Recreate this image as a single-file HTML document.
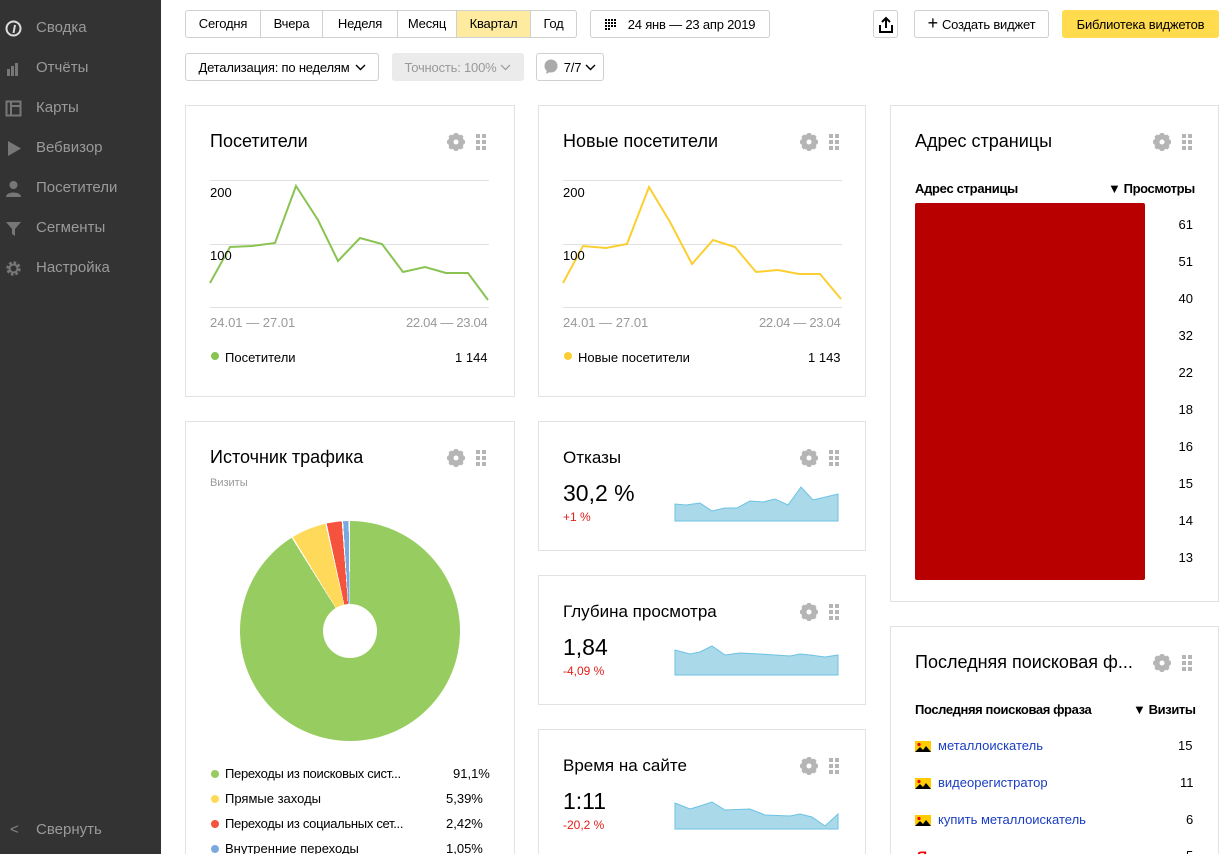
<!DOCTYPE html>
<html><head><meta charset="utf-8"><style>
*{box-sizing:border-box;margin:0;padding:0}
html,body{width:1228px;height:854px;overflow:hidden}
body{background:#fff;font-family:"Liberation Sans","DejaVu Sans",sans-serif;color:#000;position:relative}
.side{position:absolute;left:0;top:0;width:161px;height:854px;background:#333}
.si{position:absolute;left:36px;font-size:15px;color:#9a9a9a}
.ic{position:absolute;left:5px;width:17px;height:17px}
.a{position:absolute}
.btn{position:absolute;border:1px solid #d0d0d0;border-radius:3px;font-size:13px;display:flex;align-items:center;justify-content:center;background:#fff;white-space:nowrap;letter-spacing:-0.2px}
.grp{position:absolute;left:185px;top:10px;height:28px;display:flex;border:1px solid #d0d0d0;border-radius:3px;font-size:13px;overflow:hidden;letter-spacing:-0.2px}
.grp div{text-align:center;line-height:26px;border-right:1px solid #d0d0d0}
.grp div:last-child{border-right:none}
.card{position:absolute;border:1px solid #e2e2e2;background:#fff}
.t{position:absolute;font-size:18px;color:#000}
.sm{font-size:13px}
</style></head><body>
<div class="side">
 <svg class="ic" style="top:20px" viewBox="0 0 17 17"><circle cx="8.5" cy="8.5" r="7" fill="none" stroke="#ddd" stroke-width="2"/><path d="M8.5 13 L10 5" stroke="#ddd" stroke-width="2"/></svg>
 <div class="si" style="top:19px">Сводка</div>
 <svg class="ic" style="top:60px" viewBox="0 0 17 17"><rect x="2" y="9" width="3" height="7" fill="#777"/><rect x="6" y="6" width="3" height="10" fill="#777"/><rect x="10" y="3" width="3" height="13" fill="#777"/></svg>
 <div class="si" style="top:59px">Отчёты</div>
 <svg class="ic" style="top:100px" viewBox="0 0 17 17"><rect x="1.5" y="1.5" width="14" height="14" fill="none" stroke="#777" stroke-width="2"/><path d="M6 2v13M6 6h9" stroke="#777" stroke-width="2"/></svg>
 <div class="si" style="top:99px">Карты</div>
 <svg class="ic" style="top:140px" viewBox="0 0 17 17"><path d="M3 1l13 7.5L3 16z" fill="#777"/></svg>
 <div class="si" style="top:139px">Вебвизор</div>
 <svg class="ic" style="top:180px" viewBox="0 0 17 17"><circle cx="8.5" cy="5" r="4" fill="#777"/><path d="M1 17c0-6 15-6 15 0z" fill="#777"/></svg>
 <div class="si" style="top:179px">Посетители</div>
 <svg class="ic" style="top:220px" viewBox="0 0 17 17"><path d="M1 2h15l-6 7v7l-3-2V9z" fill="#777"/></svg>
 <div class="si" style="top:219px">Сегменты</div>
 <svg class="ic" style="top:260px" viewBox="0 0 17 17"><circle cx="8.5" cy="8.5" r="5.5" fill="none" stroke="#777" stroke-width="3.5" stroke-dasharray="2.5 1.8"/><circle cx="8.5" cy="8.5" r="4" fill="none" stroke="#777" stroke-width="2"/></svg>
 <div class="si" style="top:259px">Настройка</div>
 <div class="si" style="left:10px;top:821px;color:#888">&lt;</div>
 <div class="si" style="top:821px">Свернуть</div>
</div>

<div class="grp"><div style="width:75px">Сегодня</div><div style="width:62px">Вчера</div><div style="width:75px">Неделя</div><div style="width:59px">Месяц</div><div style="width:74px;background:#ffeba0">Квартал</div><div style="width:45px">Год</div></div>
<div class="btn" style="left:590px;top:10px;width:180px;height:28px"><svg width="12" height="11" style="margin-right:11px"><g fill="#000"><rect x="0" y="0" width="2" height="2"/><rect x="3" y="0" width="2" height="2"/><rect x="6" y="0" width="2" height="2"/><rect x="9" y="0" width="2" height="2"/><rect x="0" y="3" width="2" height="2"/><rect x="3" y="3" width="2" height="2"/><rect x="6" y="3" width="2" height="2"/><rect x="9" y="3" width="2" height="2"/><rect x="0" y="6" width="2" height="2"/><rect x="3" y="6" width="2" height="2"/><rect x="6" y="6" width="2" height="2"/><rect x="9" y="6" width="2" height="2"/><rect x="0" y="9" width="2" height="2"/><rect x="3" y="9" width="2" height="2"/></g></svg>24 янв — 23 апр 2019</div>
<div class="btn" style="left:873px;top:10px;width:25px;height:28px"><svg width="14" height="17" viewBox="0 0 14 17"><path d="M7 12V2M3 6l4-4 4 4" stroke="#000" stroke-width="2" fill="none"/><path d="M1 9v7h12V9" stroke="#000" stroke-width="2" fill="none"/></svg></div>
<div class="btn" style="left:914px;top:10px;width:135px;height:28px"><span style="font-size:18px;margin-right:4px;margin-top:-2px">+</span>Создать виджет</div>
<div class="btn" style="left:1062px;top:10px;width:157px;height:28px;background:#ffdb4d;border-color:#ffdb4d">Библиотека виджетов</div>

<div class="btn" style="left:185px;top:53px;width:194px;height:28px">Детализация: по неделям <svg width="11" height="7" style="margin-left:5px"><path d="M1 1l4.5 4.5L10 1" stroke="#000" stroke-width="1.4" fill="none"/></svg></div>
<div class="btn" style="left:392px;top:53px;width:132px;height:28px;background:#ebebeb;border-color:#ebebeb;color:#999">Точность: 100% <svg width="11" height="7" style="margin-left:4px"><path d="M1 1l4.5 4.5L10 1" stroke="#999" stroke-width="1.2" fill="none"/></svg></div>
<div class="btn" style="left:536px;top:53px;width:68px;height:28px"><svg width="14" height="16" style="margin-right:6px"><ellipse cx="7" cy="7" rx="6.5" ry="6.5" fill="#aaa"/><path d="M3 11l-1 4 4-2z" fill="#aaa"/></svg>7/7<svg width="11" height="7" style="margin-left:4px"><path d="M1 1l4.5 4.5L10 1" stroke="#000" stroke-width="1.4" fill="none"/></svg></div>

<svg width="0" height="0" style="position:absolute"><defs>
<g id="gear"><circle cx="9" cy="9" r="6" fill="none" stroke="#b5b5b5" stroke-width="4"/><g stroke="#b5b5b5" stroke-width="3.5"><path d="M9 0v18M0 9h18M2.6 2.6l12.8 12.8M15.4 2.6L2.6 15.4"/></g><circle cx="9" cy="9" r="2.5" fill="#fff"/></g>
<g id="dots" fill="#b5b5b5"><rect x="0" y="0" width="4" height="4"/><rect x="6" y="0" width="4" height="4"/><rect x="0" y="6" width="4" height="4"/><rect x="6" y="6" width="4" height="4"/><rect x="0" y="12" width="4" height="4"/><rect x="6" y="12" width="4" height="4"/></g>
</defs></svg>

<!-- cards -->
<div class="card" style="left:185px;top:105px;width:330px;height:292px"></div>
<div class="card" style="left:538px;top:105px;width:328px;height:292px"></div>
<div class="card" style="left:185px;top:421px;width:330px;height:450px"></div>
<div class="card" style="left:538px;top:421px;width:328px;height:130px"></div>
<div class="card" style="left:538px;top:575px;width:328px;height:130px"></div>
<div class="card" style="left:538px;top:729px;width:328px;height:140px"></div>
<div class="card" style="left:890px;top:105px;width:329px;height:497px"></div>
<div class="card" style="left:890px;top:626px;width:329px;height:250px"></div>

<svg class="a" style="left:0;top:0;z-index:2" width="1228" height="854">
 <g stroke="#e0e0e0"><path d="M210 180.5H489M210 244.5H489M210 307.5H489M563 180.5H842M563 244.5H842M563 307.5H842"/></g>
 <polyline fill="none" stroke="#8ac352" stroke-width="2" points="210,283 230,247 252,246 275,243 296,186 318,220 338,261 360,238 382,244 403,272 425,267 446,273 468,273 488,300"/>
 <polyline fill="none" stroke="#fbcf31" stroke-width="2" points="563,283 583,246 606,248 627,244 649,187 670,222 692,264 713,240 735,247 756,272 778,270 799,274 820,274 841,299"/>
 <polygon fill="#aad9ea" stroke="#6cc2e3" stroke-width="1" points="675,521 675,504 686,505 700,503 712,511 725,508 737,508 750,501 763,502 775,499 788,505 801,487 813,500 838,494 838,521"/>
 <polygon fill="#aad9ea" stroke="#6cc2e3" stroke-width="1" points="675,675 675,650 690,654 700,652 712,646 725,655 740,653 760,654 790,656 800,654 810,655 825,657 838,655 838,675"/>
 <polygon fill="#aad9ea" stroke="#6cc2e3" stroke-width="1" points="675,829 675,803 690,809 700,806 712,802 725,810 750,809 765,815 790,816 800,814 812,817 825,826 838,814 838,829"/>
</svg>

<div class="t" style="left:210px;top:131px">Посетители</div>
<svg class="a" style="left:447px;top:133px" width="46" height="18"><use href="#gear"/><use href="#dots" x="29" y="1"/></svg>
<div class="a sm" style="left:210px;top:185px;z-index:3">200</div>
<div class="a sm" style="left:210px;top:248px;z-index:3">100</div>
<div class="a sm" style="left:210px;top:315px;color:#999">24.01 — 27.01</div>
<div class="a sm" style="left:406px;top:315px;color:#999;letter-spacing:-0.3px">22.04 — 23.04</div>
<div class="a" style="left:211px;top:352px;width:8px;height:8px;border-radius:50%;background:#8ac352"></div>
<div class="a sm" style="left:225px;top:350px">Посетители</div>
<div class="a sm" style="left:455px;top:350px">1 144</div>

<div class="t" style="left:563px;top:131px">Новые посетители</div>
<svg class="a" style="left:800px;top:133px" width="46" height="18"><use href="#gear"/><use href="#dots" x="29" y="1"/></svg>
<div class="a sm" style="left:563px;top:185px;z-index:3">200</div>
<div class="a sm" style="left:563px;top:248px;z-index:3">100</div>
<div class="a sm" style="left:563px;top:315px;color:#999">24.01 — 27.01</div>
<div class="a sm" style="left:759px;top:315px;color:#999;letter-spacing:-0.3px">22.04 — 23.04</div>
<div class="a" style="left:564px;top:352px;width:8px;height:8px;border-radius:50%;background:#fbcf31"></div>
<div class="a sm" style="left:578px;top:350px">Новые посетители</div>
<div class="a sm" style="left:808px;top:350px">1 143</div>

<div class="t" style="left:210px;top:447px">Источник трафика</div>
<svg class="a" style="left:447px;top:449px" width="46" height="18"><use href="#gear"/><use href="#dots" x="29" y="1"/></svg>
<div class="a" style="left:210px;top:477px;font-size:11px;color:#999">Визиты</div>
<div class="a" style="left:240px;top:521px;width:220px;height:220px;border-radius:50%;background:conic-gradient(#97cd60 0 91.1%,#fff 91.1% 91.3%,#ffd95a 91.3% 96.4%,#fff 96.4% 96.6%,#f5533d 96.6% 98.8%,#fff 98.8% 99%,#7aa9e0 99% 99.8%,#fff 99.8%)"></div>
<div class="a" style="left:323px;top:604px;width:54px;height:54px;border-radius:50%;background:#fff"></div>
<div class="a" style="left:211px;top:770px;width:8px;height:8px;border-radius:50%;background:#97cd60"></div>
<div class="a sm" style="left:225px;top:766px;letter-spacing:-0.3px">Переходы из поисковых сист...</div><div class="a sm" style="left:453px;top:766px">91,1%</div>
<div class="a" style="left:211px;top:795px;width:8px;height:8px;border-radius:50%;background:#ffd95a"></div>
<div class="a sm" style="left:225px;top:791px">Прямые заходы</div><div class="a sm" style="left:446px;top:791px">5,39%</div>
<div class="a" style="left:211px;top:820px;width:8px;height:8px;border-radius:50%;background:#f5533d"></div>
<div class="a sm" style="left:225px;top:816px;letter-spacing:-0.3px">Переходы из социальных сет...</div><div class="a sm" style="left:446px;top:816px">2,42%</div>
<div class="a" style="left:211px;top:845px;width:8px;height:8px;border-radius:50%;background:#7aa9e0"></div>
<div class="a sm" style="left:225px;top:841px">Внутренние переходы</div><div class="a sm" style="left:446px;top:841px">1,05%</div>

<div class="t" style="left:563px;top:448px;font-size:17px">Отказы</div>
<svg class="a" style="left:800px;top:449px" width="46" height="18"><use href="#gear"/><use href="#dots" x="29" y="1"/></svg>
<div class="a" style="left:563px;top:480px;font-size:23px">30,2 %</div>
<div class="a" style="left:563px;top:510px;font-size:12px;color:#e0201a">+1 %</div>

<div class="t" style="left:563px;top:602px;font-size:17px">Глубина просмотра</div>
<svg class="a" style="left:800px;top:603px" width="46" height="18"><use href="#gear"/><use href="#dots" x="29" y="1"/></svg>
<div class="a" style="left:563px;top:634px;font-size:23px">1,84</div>
<div class="a" style="left:563px;top:664px;font-size:12px;color:#e0201a">-4,09 %</div>

<div class="t" style="left:563px;top:756px;font-size:17px">Время на сайте</div>
<svg class="a" style="left:800px;top:757px" width="46" height="18"><use href="#gear"/><use href="#dots" x="29" y="1"/></svg>
<div class="a" style="left:563px;top:788px;font-size:23px">1:11</div>
<div class="a" style="left:563px;top:818px;font-size:12px;color:#e0201a">-20,2 %</div>

<div class="t" style="left:915px;top:131px">Адрес страницы</div>
<svg class="a" style="left:1153px;top:133px" width="46" height="18"><use href="#gear"/><use href="#dots" x="29" y="1"/></svg>
<div class="a sm" style="left:915px;top:181px;font-weight:bold;letter-spacing:-0.3px">Адрес страницы</div>
<div class="a sm" style="left:1108px;top:181px;font-weight:bold;letter-spacing:-0.4px">▼ Просмотры</div>
<div class="a" style="left:915px;top:203px;width:230px;height:377px;background:#b80000;border-radius:2px"></div>
<div class="a sm" style="left:1150px;top:206px;width:43px;text-align:right;line-height:37px">61<br>51<br>40<br>32<br>22<br>18<br>16<br>15<br>14<br>13</div>

<div class="t" style="left:915px;top:652px">Последняя поисковая ф...</div>
<svg class="a" style="left:1153px;top:654px" width="46" height="18"><use href="#gear"/><use href="#dots" x="29" y="1"/></svg>
<div class="a sm" style="left:915px;top:702px;font-weight:bold;letter-spacing:-0.4px">Последняя поисковая фраза</div>
<div class="a sm" style="left:1133px;top:702px;font-weight:bold;letter-spacing:-0.4px">▼ Визиты</div>
<svg class="a" style="left:915px;top:741px" width="16" height="11"><rect width="16" height="11" fill="#ffcc00"/><circle cx="4" cy="3.5" r="1.6" fill="#e00"/><path d="M0 11L5 6l3 3 3-4 5 6z" fill="#000"/></svg>
<div class="a sm" style="left:938px;top:738px;color:#1a3dc1">металлоискатель</div><div class="a sm" style="left:1178px;top:738px">15</div>
<svg class="a" style="left:915px;top:778px" width="16" height="11"><rect width="16" height="11" fill="#ffcc00"/><circle cx="4" cy="3.5" r="1.6" fill="#e00"/><path d="M0 11L5 6l3 3 3-4 5 6z" fill="#000"/></svg>
<div class="a sm" style="left:938px;top:775px;color:#1a3dc1">видеорегистратор</div><div class="a sm" style="left:1180px;top:775px">11</div>
<svg class="a" style="left:915px;top:815px" width="16" height="11"><rect width="16" height="11" fill="#ffcc00"/><circle cx="4" cy="3.5" r="1.6" fill="#e00"/><path d="M0 11L5 6l3 3 3-4 5 6z" fill="#000"/></svg>
<div class="a sm" style="left:938px;top:812px;color:#1a3dc1">купить металлоискатель</div><div class="a sm" style="left:1186px;top:812px">6</div>
<div class="a" style="left:917px;top:848px;font-size:14px;color:#e00;font-weight:bold">Я</div>
<div class="a sm" style="left:1186px;top:848px">5</div>
</body></html>
